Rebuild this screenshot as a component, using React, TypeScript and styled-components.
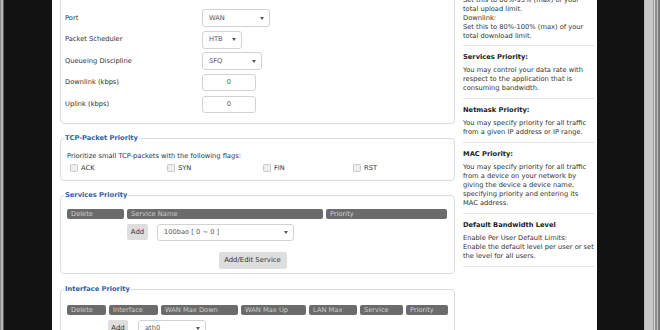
import React from "react";
import styled, { createGlobalStyle } from "styled-components";

const Global = createGlobalStyle`
  html, body { margin: 0; padding: 0; background: #121212; }
  body { font-family: "DejaVu Sans", Verdana, sans-serif; }
  * { box-sizing: border-box; }
`;

const Screen = styled.div`
  display: flex;
  width: 660px;
  height: 330px;
  overflow: hidden;
  background: #121212;
`;

const FrameEdge = styled.div`
  flex: 0 0 4px;
  background: linear-gradient(to right, #8a8a8a 0 1px, #b6b6b6 1px 3px, #5a5a5a 3px 4px);
`;

const Gutter = styled.div<{ $w: number }>`
  flex: 0 0 ${(p) => p.$w}px;
  background: #121212;
`;

const Page = styled.div`
  flex: 0 0 545px;
  background: #fff;
  display: flex;
  align-items: flex-start;
  overflow: hidden;
  font-size: 6.7px;
  line-height: 9px;
  color: #333;
`;

const Scrollbar = styled.div`
  flex: 0 0 16px;
  background: linear-gradient(
    to right,
    #b8b8b8 0 1px,
    #c9c9c9 1px 9px,
    #9a9a9a 9px 10px,
    #dedede 10px 11px,
    #8c8c8c 11px 13px,
    #c4c4c4 13px 14px,
    #7a7a7a 14px 16px
  );
`;

const Main = styled.main`
  flex: 0 0 401px;
  padding-left: 8px;
  margin-top: -32px;
`;

const Fieldset = styled.fieldset<{ $pt?: number; $pb?: number; $mb?: number }>`
  margin: 0 0 ${(p) => p.$mb ?? 9.5}px 0;
  padding: ${(p) => p.$pt ?? 9}px 6px ${(p) => p.$pb ?? 8}px 6px;
  border: 1px solid #dcdcdc;
  border-radius: 4px;
  min-width: 0;
`;

const Legend = styled.legend`
  padding: 0 1px;
  margin-left: -3px;
  font-weight: bold;
  line-height: 9px;
  color: #2f5fa8;
`;

const FormRow = styled.div`
  display: flex;
  align-items: center;
  height: 21.5px;
  margin-left: -2px;
`;

const Label = styled.div`
  flex: 0 0 137px;
`;

const SelectBox = styled.div<{ $w: number; $h?: number }>`
  width: ${(p) => p.$w}px;
  height: ${(p) => p.$h ?? 18}px;
  border: 1px solid #d2d2d2;
  border-radius: 3px;
  background: #fff;
  display: flex;
  align-items: center;
  justify-content: space-between;
  padding: 0 5px 0 6px;
  color: #555;
`;

const Arrow = styled.span`
  width: 0;
  height: 0;
  border-left: 2.5px solid transparent;
  border-right: 2.5px solid transparent;
  border-top: 3px solid #555;
`;

const TextInput = styled.div`
  width: 54px;
  height: 17px;
  border: 1px solid #d2d2d2;
  border-radius: 3px;
  display: flex;
  align-items: center;
  justify-content: center;
  color: #555;
`;

const RadioGroup = styled.div`
  display: flex;
  align-items: center;
  gap: 6px;
`;

const Radio = styled.span`
  display: inline-block;
  width: 7px;
  height: 7px;
  border: 1px solid #9a9a9a;
  border-radius: 50%;
  margin-right: 3px;
  vertical-align: middle;
`;

const Note = styled.div`
  padding-left: 0;
`;

const FlagRow = styled.div`
  display: flex;
  align-items: flex-end;
  margin-top: 3px;
  padding-left: 3px;
`;

const Flag = styled.label<{ $w?: number }>`
  display: flex;
  align-items: flex-end;
  gap: 3px;
  ${(p) => (p.$w ? `flex: 0 0 ${p.$w}px;` : "")}
  line-height: 8px;
`;

const Check = styled.span`
  width: 8px;
  height: 8px;
  border: 1px solid #c9c9c9;
  border-radius: 1.5px;
  background: #eeeeee;
  margin-bottom: 0.5px;
`;

const HeadRow = styled.div`
  display: flex;
  gap: 3px;
`;

const HeadCell = styled.div<{ $w: number }>`
  flex: 0 0 ${(p) => p.$w}px;
  height: 10px;
  line-height: 10px;
  background: #6b6b6b;
  color: #cdcdcd;
  border-radius: 2px;
  padding-left: 4px;
  white-space: nowrap;
  overflow: hidden;
`;

const DataRow = styled.div`
  display: flex;
  align-items: center;
  margin-top: 5px;
`;

const Spacer = styled.div<{ $w: number }>`
  flex: 0 0 ${(p) => p.$w}px;
`;

const Button = styled.button<{ $w: number; $h?: number }>`
  width: ${(p) => p.$w}px;
  height: ${(p) => p.$h ?? 16}px;
  padding: 0;
  border: none;
  border-radius: 2px;
  background: #dedede;
  color: #333;
  font-family: inherit;
  font-size: 6.9px;
  line-height: 9px;
`;

const ButtonBar = styled.div`
  display: flex;
  justify-content: center;
  padding-right: 10px;
  margin-top: 11px;
`;

const Sidebar = styled.aside`
  flex: 0 0 144px;
  padding: 0 4px 0 8px;
  margin-top: -33px;
`;

const HelpSection = styled.section<{ $pb?: number }>`
  padding: 5.5px 0 ${(p) => p.$pb ?? 5.5}px;
  margin-right: 2px;
  border-bottom: 1px solid #e4e4e4;
`;

const HelpTitle = styled.div`
  font-weight: bold;
  line-height: 10px;
  margin-bottom: 4px;
  color: #222;
`;

const HelpText = styled.div`
  color: #333;
  white-space: nowrap;
`;

const serviceHeads = [
  { t: "Delete", w: 57 },
  { t: "Service Name", w: 196 },
  { t: "Priority", w: 121 },
];

const ifaceHeads = [
  { t: "Delete", w: 39 },
  { t: "Interface", w: 49 },
  { t: "WAN Max Down", w: 77 },
  { t: "WAN Max Up", w: 65 },
  { t: "LAN Max", w: 48 },
  { t: "Service", w: 43 },
  { t: "Priority", w: 42 },
];

const help = [
  {
    title: "Uplink / Downlink:",
    lines: [
      "Uplink:",
      "Set this to 80%-95% (max) of your",
      "total upload limit.",
      "Downlink:",
      "Set this to 80%-100% (max) of your",
      "total download limit.",
    ],
  },
  {
    title: "Services Priority:",
    lines: ["You may control your data rate with", "respect to the application that is", "consuming bandwidth."],
  },
  {
    title: "Netmask Priority:",
    lines: ["You may specify priority for all traffic", "from a given IP address or IP range."],
  },
  {
    title: "MAC Priority:",
    lines: [
      "You may specify priority for all traffic",
      "from a device on your network by",
      "giving the device a device name,",
      "specifying priority and entering its",
      "MAC address.",
    ],
  },
  {
    title: "Default Bandwidth Level",
    lines: ["Enable Per User Default Limits:", "Enable the default level per user or set", "the level for all users."],
  },
];

export default function App() {
  return (
    <>
      <Global />
      <Screen>
        <FrameEdge />
        <Gutter $w={48} />
        <Page>
          <Main>
            <Fieldset>
              <Legend>QoS Settings</Legend>
              <FormRow>
                <Label>Start QoS</Label>
                <RadioGroup>
                  <span>
                    <Radio />
                    Enable
                  </span>
                  <span>
                    <Radio />
                    Disable
                  </span>
                </RadioGroup>
              </FormRow>
              <FormRow>
                <Label>Port</Label>
                <SelectBox $w={68}>
                  WAN
                  <Arrow />
                </SelectBox>
              </FormRow>
              <FormRow>
                <Label>Packet Scheduler</Label>
                <SelectBox $w={40}>
                  HTB
                  <Arrow />
                </SelectBox>
              </FormRow>
              <FormRow>
                <Label>Queueing Discipline</Label>
                <SelectBox $w={60}>
                  SFQ
                  <Arrow />
                </SelectBox>
              </FormRow>
              <FormRow>
                <Label>Downlink (kbps)</Label>
                <TextInput>0</TextInput>
              </FormRow>
              <FormRow>
                <Label>Uplink (kbps)</Label>
                <TextInput>0</TextInput>
              </FormRow>
            </Fieldset>

            <Fieldset>
              <Legend>TCP-Packet Priority</Legend>
              <Note>Prioritize small TCP-packets with the following flags:</Note>
              <FlagRow>
                <Flag $w={97}>
                  <Check />
                  ACK
                </Flag>
                <Flag $w={96}>
                  <Check />
                  SYN
                </Flag>
                <Flag $w={90}>
                  <Check />
                  FIN
                </Flag>
                <Flag>
                  <Check />
                  RST
                </Flag>
              </FlagRow>
            </Fieldset>

            <Fieldset $pb={4} $mb={11.5}>
              <Legend>Services Priority</Legend>
              <HeadRow>
                {serviceHeads.map((h) => (
                  <HeadCell key={h.t} $w={h.w}>
                    {h.t}
                  </HeadCell>
                ))}
              </HeadRow>
              <DataRow>
                <Spacer $w={60} />
                <Button $w={21}>Add</Button>
                <Spacer $w={9} />
                <SelectBox $w={137} $h={17}>
                  100bao [ 0 ~ 0 ]
                  <Arrow />
                </SelectBox>
              </DataRow>
              <ButtonBar>
                <Button $w={68} $h={17}>
                  Add/Edit Service
                </Button>
              </ButtonBar>
            </Fieldset>

            <Fieldset $pt={10.5}>
              <Legend>Interface Priority</Legend>
              <HeadRow>
                {ifaceHeads.map((h) => (
                  <HeadCell key={h.t} $w={h.w}>
                    {h.t}
                  </HeadCell>
                ))}
              </HeadRow>
              <DataRow>
                <Spacer $w={41} />
                <Button $w={20}>Add</Button>
                <Spacer $w={10} />
                <SelectBox $w={68} $h={17}>
                  ath0
                  <Arrow />
                </SelectBox>
              </DataRow>
            </Fieldset>
          </Main>

          <Sidebar>
            {help.map((s, idx) => (
              <HelpSection key={s.title} $pb={idx === 0 ? 4.5 : undefined}>
                <HelpTitle>{s.title}</HelpTitle>
                {s.lines.map((l, i) => (
                  <HelpText key={i}>{l}</HelpText>
                ))}
              </HelpSection>
            ))}
          </Sidebar>
        </Page>
        <Gutter $w={47} />
        <Scrollbar />
      </Screen>
    </>
  );
}
